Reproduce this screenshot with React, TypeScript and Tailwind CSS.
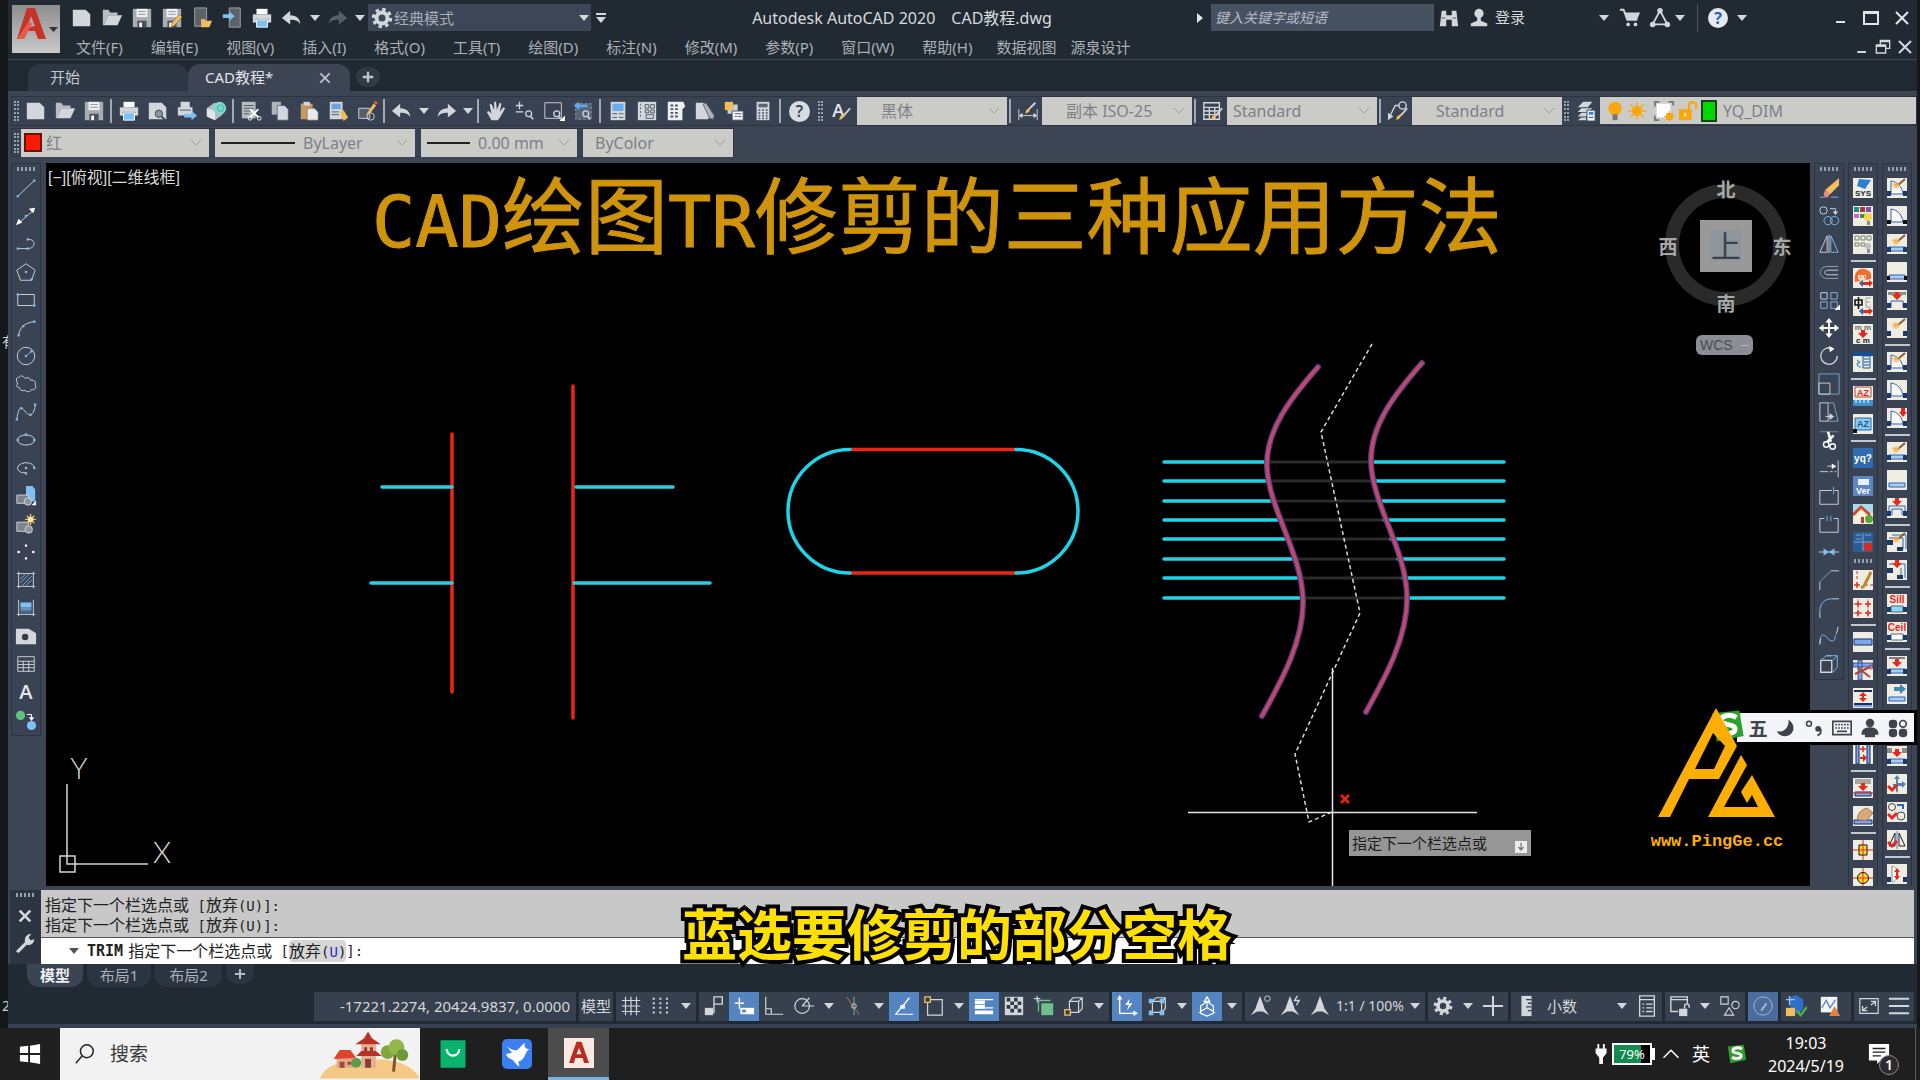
import type { ReactNode } from 'react'

const L = '#d3d7dc'
const B = '#7cc0f4'
const O = '#f2bd5c'

function Svg({ s = 24, box = 24, children }: { s?: number; box?: number; children: ReactNode }) {
  return (
    <svg width={s} height={s} viewBox={`0 0 ${box} ${box}`} fill="none" stroke="none" className="shrink-0">
      {children}
    </svg>
  )
}

function Dot({ x, y, c = B }: { x: number; y: number; c?: string }) {
  return <rect x={x - 1.2} y={y - 1.2} width="2.4" height="2.4" fill={c} />
}

const page = <path d="M2 3h14l5 5v13H2z" fill={L} />
const folder = (
  <>
    <path d="M2 20V3h6l2 3h8v3H8L3 20z" fill="#b9bec5" />
    <path d="M8 9h15l-5 11H3z" fill={L} />
  </>
)
const floppy = (
  <>
    <path d="M2 2h20v20H2z" fill="#a9adb2" />
    <path d="M6 2h12v9H6z" fill="#eef0f2" />
    <path d="M8 5h8M8 8h8" stroke="#8b9096" />
    <path d="M7 15h10v7H7z" fill="#4a525e" />
    <path d="M9 17h3v5H9z" fill="#fff" />
  </>
)
const printer = (
  <>
    <path d="M6 2h12v6H6z" fill="#fff" />
    <path d="M2 8h20v9H2z" fill={L} />
    <path d="M5 13h14v1H5z" fill="#4c5560" />
    <path d="M6 14h12v8H6z" fill={B} stroke="#fff" />
  </>
)
const pencil = <path d="M20 8l3 3-8 9-4 2 1-5z" fill={O} stroke="#7a5b33" strokeWidth=".6" />
const undo = <path d="M10 4v5c7 0 11 4 11 10-2-4-5-5-11-5v5l-9-7z" fill={L} />
const brush = (
  <>
    <path d="M22 9l-7 8" stroke={L} strokeWidth="2" />
    <path d="M17 14l-3 6-4 2 1-4z" fill={O} />
  </>
)
const gear = (
  <>
    <circle cx="12" cy="12" r="5.5" stroke={L} strokeWidth="4" />
    <circle cx="12" cy="12" r="8.5" stroke={L} strokeWidth="3.4" strokeDasharray="3.4 3.27" />
  </>
)
const lens = (x: number, y: number) => (
  <>
    <circle cx={x} cy={y} r="3.2" stroke={L} strokeWidth="1.4" />
    <path d={`M${x + 2} ${y + 3}l3 3`} stroke={L} strokeWidth="1.8" />
  </>
)
const person = (c: string) => (
  <>
    <circle cx="12" cy="7" r="5" fill={c} />
    <path d="M10 10h4v5l7 3v3H3v-3l7-3z" fill={c} />
  </>
)

const quickIcons: [string, ReactNode][] = [
  ['新建', page],
  ['打开', folder],
  ['保存', floppy],
  ['另存为', <>{floppy}{pencil}</>],
  ['从移动设备打开', <><path d="M4 1h13v20H4z" fill="#5d6268" stroke="#a1a7ad" /><path d="M11 22v-9h4l1 2h7l-3 7z" fill={O} /></>],
  ['保存到移动设备', <><path d="M9 1h12v21H9z" fill="#5d6268" stroke="#a1a7ad" /><path d="M2 8h7V5l6 5-6 5v-3H2z" fill={B} /></>],
  ['打印', printer],
]

type Tool = [string, ReactNode]

const fileTools: Tool[] = [['新建', page], ['打开', folder], ['保存', floppy]]
const plotTools: Tool[] = [
  ['打印', printer],
  ['打印预览', <>{page}<circle cx="13" cy="15" r="4" fill="#8f959d" stroke="#3c434e" /><path d="M16 18l4 4" stroke="#3c434e" strokeWidth="2" /></>],
  ['发布', <><path d="M5 2h10v6h3v9H2V8h3z" fill={L} /><path d="M4 11h12" stroke="#4c5560" /><path d="M9 15h8v-3l6 5-6 5v-3H9z" fill={B} /></>],
  ['3D 打印', <><path d="M2 9l8-6 9 3v10l-8 6-9-4z" fill="#b7bbc0" /><path d="M2 9l9 3v10l-9-4z" fill="#e3e5e7" /><circle cx="16" cy="9" r="7" fill="#7ed8cf" /><circle cx="17" cy="9" r="3.5" stroke="#48a89f" /></>],
]
const editTools: Tool[] = [
  ['剪切', <><path d="M2 2h15v18H2z" fill="#b9bdc2" /><path d="M4 6h11M4 9h11M4 12h8M4 15h6" stroke="#4c5560" /><path d="M11 10l9 9M20 10l-9 9" stroke="#fff" strokeWidth="2" /><circle cx="11" cy="20" r="2" stroke="#fff" /><circle cx="21" cy="20" r="2" stroke="#fff" /></>],
  ['复制', <><path d="M3 2h10v14H3z" fill="#aeb3b9" /><path d="M9 6h8l4 4v12H9z" fill={L} stroke="#495260" strokeWidth=".7" /></>],
  ['粘贴', <><path d="M3 4h13v17H3z" fill="#c59a5c" /><path d="M6 2h7v4H6z" fill={L} /><path d="M10 9h8l4 4v9H10z" fill="#e7e9eb" stroke="#555" strokeWidth=".6" /></>],
  ['特性匹配', <><path d="M3 2h14v19H3z" fill={L} /><path d="M5 4h10v6H5z" fill="#6ba4e0" /><path d="M5 13h8M5 16h8" stroke="#4c5560" /><path d="M14 13l4-2 5 8-5 4z" fill={O} /></>],
  ['块编辑器', <><path d="M3 9h12v11H3z" fill="#565e6b" stroke={L} /><circle cx="16" cy="18" r="4" stroke={L} /><path d="M19 4l3 2-7 9-4 1z" fill={O} /><path d="M20 2l3 2" stroke="#e2574a" strokeWidth="3" /></>],
]
const viewTools: Tool[] = [
  ['平移', <path d="M7 22l-5-9 2-1 3 3L5 5l2-1 3 7V2h2l1 9 3-8 2 1-2 9 4-5 2 1-5 9-3 4z" fill={L} />],
  ['实时缩放', <><path d="M2 6h8M6 2v8M2 13h8" stroke={L} strokeWidth="1.5" />{lens(16, 15)}</>],
  ['窗口缩放', <><path d="M2 3h18v17H2z" stroke={L} />{lens(15, 15)}<path d="M24 17v6h-6z" fill="#fff" /></>],
  ['缩放上一个', <><path d="M4 4h17v17H4z" fill="#566577" stroke="#8c97a6" strokeDasharray="3 2" /><path d="M2 6l6-4v3h9v3H8v3z" fill="#63a9e8" />{lens(15, 15)}</>],
]
const paletteTools: Tool[] = [
  ['特性', <><path d="M4 2h16v20H4z" fill={L} /><path d="M6 4h12v8H6z" fill="#69adf0" /><path d="M6 15h5M13 15h5M6 19h5M13 19h5" stroke="#4c5560" /></>],
  ['设计中心', <><path d="M2 2h20v20H2z" fill={L} /><path d="M5 4v16" stroke="#4c5560" strokeDasharray="2 2" /><path d="M10 5h4v4h-4zM16 5h4v4h-4zM10 11h4v3h-4zM16 11h4v3h-4zM11 16h8v4h-8z" stroke="#4c5560" /></>],
  ['工具选项板', <><path d="M3 2h17l2 5-3 3v12H3z" fill="#eef0f2" /><path d="M6 6h3M11 6h3M6 10h3M11 10h3M6 14h3M11 14h3M6 18h3M11 18h3" stroke="#4c5560" strokeWidth="2" /></>],
  ['图纸集', <><path d="M2 3h8l10 12-5 6H2z" fill={L} /><path d="M10 5l3-2 9 14-1 4-4-1z" fill="#aeb3b9" stroke="#5b6370" /></>],
  ['标记集', <><path d="M2 2h9v9H2z" fill={O} /><path d="M11 5h5v6h-5zM5 11h11v4H5z" fill="#c9cdd2" /><path d="M10 12h12v10H10z" fill="#f3f4f5" stroke="#4c5560" /><path d="M13 18h2M16 18h4M13 15h7" stroke="#4c5560" /></>],
  ['快速计算器', <><path d="M5 2h14v20H5z" fill={L} /><path d="M7 4h10v4H7z" fill="#5b6370" /><path d="M7 11h10M7 14h10M7 17h10M7 20h10" stroke="#5b6370" strokeWidth="2" strokeDasharray="2 2" /></>],
]

const drawTools: Tool[] = [
  ['直线', <><path d="M3 21L21 4" stroke={L} /><Dot x={3} y={21} /><Dot x={21} y={4} /></>],
  ['构造线', <><path d="M5 19L20 6" stroke={L} /><path d="M1 22l3-7 4 4zM22 3l-7 1 5 5z" fill="#fff" /><Dot x={12} y={12} /></>],
  ['多段线', <><path d="M3 17h11M14 7c9-1 9 10 0 10" stroke={L} /><Dot x={3} y={17} /><Dot x={14} y={17} /><Dot x={14} y={7} /></>],
  ['多边形', <><path d="M12 3l10 7-4 11H6L2 10z" stroke={L} /><Dot x={12} y={12} /><Dot x={18} y={20} /></>],
  ['矩形', <><path d="M3 6h18v12H3z" stroke={L} /><Dot x={3} y={6} /><Dot x={21} y={18} /></>],
  ['圆弧', <><path d="M4 20C5 12 10 6 22 5" stroke={L} /><Dot x={4} y={20} /><Dot x={9} y={10} /><Dot x={21} y={5} /></>],
  ['圆', <><circle cx="12" cy="12" r="9.5" stroke={L} /><path d="M12 12l7-6" stroke={B} /><Dot x={12} y={12} /><Dot x={18} y={7} /></>],
  ['修订云线', <path d="M3 12c-2-4-2-8 1-7 2-3 5-2 7 1 3-2 6 0 6 2 4-1 6 2 5 5 2 3-1 6-4 5-1 3-5 3-7 1-4 1-6-1-6-3-3 0-4-2-2-4z" stroke={L} />],
  ['样条曲线', <><path d="M2 21C3 9 6 6 8 8c4 4 6 8 9 7 3-1 5-6 5-12" stroke={L} /><Dot x={2} y={20} /><Dot x={7} y={8} /><Dot x={17} y={15} /><Dot x={22} y={4} /></>],
  ['椭圆', <><ellipse cx="12" cy="12" rx="9.5" ry="5.5" stroke={L} /><Dot x={3} y={12} /><Dot x={21} y={12} /><Dot x={12} y={6} /></>],
  ['椭圆弧', <><path d="M12 17C5 18 2 14 3 11c3-7 18-6 18 1" stroke={L} /><Dot x={12} y={12} /><Dot x={21} y={12} /><Dot x={12} y={18} /></>],
  ['插入块', <><path d="M12 1h7l3 4v13H12z" fill={B} /><path d="M2 11h13v9H2z" fill="#7d848e" stroke={L} /><circle cx="14" cy="18" r="4" fill="#8e949c" stroke={L} /><path d="M23 17v5h-5z" fill="#fff" /></>],
  ['创建块', <><path d="M2 10h13v10H2z" fill="#7d848e" stroke={L} /><circle cx="15" cy="18" r="4" fill="#8e949c" stroke={L} /><path d="M17 1v12M11 7h12M13 3l8 8M21 3l-8 8" stroke={O} strokeWidth="1.5" /><circle cx="17" cy="7" r="3" fill="#ffe9a8" /></>],
  ['点', <><Dot x={12} y={5} c="#fff" /><Dot x={4} y={12} c="#fff" /><Dot x={20} y={12} c="#fff" /><Dot x={12} y={19} c="#fff" /></>],
  ['图案填充', <><path d="M4 3v18M20 3v18M2 5h20M2 19h20" stroke={L} /><path d="M6 11l5-5M6 15l9-9M8 18l10-10M12 18l6-6" stroke={B} /></>],
  ['渐变色', <><path d="M4 3v18M20 3v18M2 19h20" stroke={L} /><path d="M6 6h12v5H6z" fill={B} /><path d="M6 11h12v4H6z" fill="#6792bd" /><path d="M6 15h12v3H6z" fill="#4d6785" /></>],
  ['面域', <><path d="M1 4h14l8 5v12H1z" fill={L} /><circle cx="11" cy="13" r="3.5" fill="#323b48" /></>],
  ['表格', <path d="M3 4h18v16H3zM3 9h18M3 12.500h18M3 16h18M9 9v11M15 9v11" stroke={L} />],
  ['多行文字', <text x="12" y="20" fill="#e4e7ea" fontSize="22" fontWeight="600" textAnchor="middle" fontFamily="Open Sans, sans-serif">A</text>],
  ['添加选定对象', <><circle cx="6" cy="7" r="5" fill="#5ec47f" /><circle cx="18" cy="18" r="5" fill={B} /><path d="M13 6h5v4" stroke="#fff" /><path d="M15 9h6l-3 4z" fill="#fff" /></>],
]

const modifyTools: Tool[] = [
  ['删除', <><path d="M2 22h6M14 22h8" stroke={B} /><path d="M23 1v8L13 19l-5-5z" fill={O} /><path d="M8 14l5 4-2 4H8l-2-3z" fill="#e58a86" /></>],
  ['复制', <><circle cx="6" cy="6" r="4" stroke={L} /><circle cx="11" cy="17" r="4.500" stroke={B} /><circle cx="18" cy="17" r="4.500" stroke={B} /><path d="M13 4h6v4" stroke={L} /><path d="M16 7h6l-3 4z" fill={L} /></>],
  ['镜像', <><path d="M10 3v18H2zM12 2v20" stroke={L} /><path d="M14 3v18h8z" stroke={B} /></>],
  ['偏移', <><path d="M22 6H10C0 6 0 19 10 19h12" stroke="#9aa6b5" /><path d="M22 10H11c-5 0-5 5 0 5h11" stroke={L} /></>],
  ['阵列', <><path d="M3 4h7v7H3z" stroke={L} /><path d="M14 4h7v7h-7zM3 14h7v7H3zM14 14h7v7h-7z" stroke="#8bb9dd" /><path d="M24 17v6h-6z" fill="#fff" /></>],
  ['移动', <><path d="M12 4v16M4 12h16" stroke="#fff" strokeWidth="2" /><path d="M12 1l4 5H8zM12 23l4-5H8zM1 12l5-4v8zM23 12l-5-4v8z" fill="#fff" /></>],
  ['旋转', <><path d="M16 4a9 9 0 1 0 5 8" stroke={L} strokeWidth="1.400" /><path d="M12 1l6 3-5 4z" fill="#fff" /></>],
  ['缩放', <><path d="M1 1h22v22H1z" stroke="#7ca7cc" /><path d="M1 11h12v12H1z" stroke={L} /></>],
  ['拉伸', <><path d="M2 2h9v20H2z" stroke={L} /><path d="M11 2h6l5 20H11" stroke="#7ca7cc" /><path d="M8 17h7M13 14l4 3-4 3z" stroke={L} fill={L} /></>],
  ['修剪', <><path d="M2 3h20" stroke="#7c8899" /><path d="M11 3l3 11M17 7l-7 7" stroke="#fff" strokeWidth="2.800" /><circle cx="9" cy="17" r="3" stroke="#fff" strokeWidth="1.600" /><circle cx="16" cy="19" r="3" stroke="#fff" strokeWidth="1.600" /></>],
  ['延伸', <><path d="M2 16h18" stroke={L} strokeDasharray="9 2 3 2" /><path d="M22 4v18M10 10h6" stroke={L} /><path d="M15 7l5 3-5 3z" fill="#fff" /></>],
  ['打断于点', <><path d="M15 6H2v15h20V6h-4" stroke={L} /><path d="M17 2v8" stroke={B} /></>],
  ['打断', <><path d="M7 6H2v15h20V6h-5" stroke={L} /><path d="M10 3v6M14 3v6" stroke={B} /></>],
  ['合并', <><path d="M1 12h22" stroke={L} /><path d="M6 8l6 4-6 4zM18 8l-6 4 6 4z" fill={B} /></>],
  ['倒角', <><path d="M2 23v-9M14 2h9" stroke={L} /><path d="M2 14L14 2" stroke="#8fa0b3" /></>],
  ['圆角', <><path d="M2 23v-7M15 2h8" stroke={L} /><path d="M2 16C2 7 7 2 15 2" stroke={B} /></>],
  ['光顺曲线', <><path d="M2 21c0-12 4-12 8-7s9 5 9-3" stroke={B} /><path d="M2 21l1-6M20 10l2-8" stroke={L} /></>],
  ['分解', <><path d="M3 8h12v13H3z" stroke={L} strokeWidth="1.500" /><path d="M3 8l6-5h12l-5 5M21 3v13l-5 5M9 3h6" stroke={B} /></>],
]

// plug-in tiles, drawn on a 20px grid
const beam = <path d="M2 13h16v4H2z" fill="#a9cdf0" stroke="#2c62b8" />
const jambs = <path d="M0 13h4v5H0zM16 13h4v5h-4z" fill="#1d3a66" />
const doorArc = <path d="M4 16V3c7 1 11 6 12 13z" fill="#fbfaf5" stroke="#2c62b8" />
const wand = (
  <>
    <path d="M18 1l-7 6" stroke="#8a5a35" strokeWidth="2" />
    <path d="M9 4v7M5 7h8M6 5l6 5M12 5l-6 5" stroke="#f0a838" />
  </>
)
const down = (y = 0) => <path d={`M8 ${y}h4v3h3l-5 5-5-5h3z`} fill="#e8261c" />
const tick = <path d="M1 12l4 4 5-5" stroke="#e8261c" strokeWidth="3" />
const crosses = (pts: [number, number][]) =>
  pts.map(([x, y]) => <path key={`${x}-${y}`} d={`M${x - 3} ${y}h6M${x} ${y - 3}v6`} stroke="#d93025" strokeWidth="1.500" />)
const tileText = (t: string, y: number, c: string, size = 9) => (
  <text x="10" y={y} fill={c} fontSize={size} fontWeight="700" textAnchor="middle" fontFamily="Liberation Sans, sans-serif">
    {t}
  </text>
)

const SEP: Tool = ['', null]
const GRIP: Tool = ['grip', null]

const pluginTools: Tool[] = [
  ['系统', <><path d="M6 1l12 1-6 9-8-3z" fill="#2f7fd0" />{tileText('SYS', 18, '#1c2a33', 8)}</>],
  ['图层颜色', <><path d="M1 1h5v5H1z" fill="#1c8f84" /><path d="M7 1h5v5H7z" fill="#a03a3a" /><path d="M13 1h5v5h-5z" fill="#7c4fa8" /><path d="M1 8h5v4H1z" fill="#e05bd2" /><path d="M7 8h5v4H7z" fill="#3c8f4c" /><circle cx="15" cy="11" r="4" fill="#f9d54a" /><path d="M14 15h3v4h-3z" fill="#8f8f8f" /></>],
  ['图层', <><path d="M2 2h4v4H2zM8 2h4v4H8zM14 2h4v4h-4zM2 9h4v3H2zM8 9h4v3H8z" stroke="#74806e" /><circle cx="15" cy="12" r="3" fill="#b8bec4" /><path d="M14 15h3v4h-3z" fill="#8f8f8f" /></>],
  SEP,
  ['用户', <><path d="M2 14C0 2 8 0 11 1c7 1 8 6 7 10z" fill="#f07030" /><circle cx="9" cy="9" r="4" fill="#ffd9b8" /><path d="M5 6h8" stroke="#f07030" strokeWidth="2" /><path d="M7 9h1M11 9h1" stroke="#333" /><path d="M6 15l4-3v2h6v-2l4 3-4 4v-2h-6v2z" fill="#e8261c" /><path d="M6 15l4-3v7z" fill="#1f6fd0" /></>],
  ['中英', <><path d="M2 4h7v5H2zM5.500 1v12" stroke="#111" strokeWidth="1.600" /><path d="M18 2h-5v9h5M13 6h4" stroke="#9ba39a" /><path d="M6 15l4-3v2h6v-2l4 3-4 4v-2h-6v2z" fill="#e8261c" /><path d="M6 15l4-3v7z" fill="#1f6fd0" /></>],
  ['单位换算', <>{tileText('m m', 6, '#6f6a60', 8)}{tileText('c m', 19, '#222', 8)}{down(6)}</>],
  ['窗口', <><path d="M0 0h20v4H0z" fill="#18508f" /><path d="M10 4h7v12h-7z" fill="#dff0fb" stroke="#18508f" /><path d="M11 7h5M11 10h5M11 13h5" stroke="#18508f" /><path d="M8 15c-5 0-5-5-1-5M4 8l3 2-3 3" stroke="#2c7fd6" /></>],
  SEP,
  ['文字标尺', <><path d="M2 1h16v10H2z" stroke="#b84b40" />{tileText('AZ', 10, '#e8261c')}<path d="M0 14h20v6H0z" fill="#3d93d0" /><path d="M3 14v3M7 14v3M11 14v3M15 14v3" stroke="#fff" /></>],
  ['文字框', <><path d="M2 4h16v12H2z" fill="#8ccbf0" stroke="#27689f" />{tileText('AZ', 13, '#175a96')}<path d="M0 15h4v4H0z" fill="#111" /></>],
  SEP,
  ['帮助', <><path d="M0 0h20v20H0z" fill="#2f6db0" />{tileText('yq?', 14, '#fff', 10)}</>],
  ['版本', <><path d="M0 0h20v20H0z" fill="#5d84c4" /><path d="M5 3h11v6H5z" fill="#e9f2fb" />{tileText('Ver', 18, '#fff', 9)}</>],
  ['主页', <><path d="M0 0h20v9H0z" fill="#a8d8ee" /><path d="M2 11l7-8 8 8v7H4v-7z" fill="#fff1dc" /><path d="M0 11L8 3l9 8" stroke="#cf4a2a" strokeWidth="3" /><path d="M8 13h3v6H8z" fill="#b0452c" /><circle cx="16" cy="15" r="4" fill="#57a639" /></>],
  ['图框', <><path d="M0 0h20v20H0z" fill="#2b5c97" /><path d="M1 10h18M10 1v18M3 3h5M12 3h6M3 7h5" stroke="#7fa8cc" /><path d="M11 11h8v8h-8z" fill="#d82b22" /></>],
  GRIP,
  ['轴线绘制', <><path d="M4 1v9M12 15h8" stroke="#d93025" strokeDasharray="3 2" />{crosses([[4, 15]])}<path d="M18 2l-7 14-3 2" stroke="#b98a2e" strokeWidth="3" /></>],
  ['轴网', <>{crosses([[5, 6], [15, 6], [5, 15], [15, 15]])}<path d="M5 1v19M15 1v19M0 6h20M0 15h20" stroke="#d93025" strokeWidth=".6" strokeDasharray="2 2" /></>],
  SEP,
  ['墙体', <path d="M1 7h18v6H1z" fill="#7fa5ee" stroke="#15305c" />],
  ['墙体修剪', <><path d="M0 3h20v4H0zM5 0h4v20H5z" fill="#7fa5ee" stroke="#15305c" strokeWidth=".7" /><path d="M2 14l15-7M5 8l12 9" stroke="#b0452c" strokeWidth="2" /><circle cx="18" cy="7" r="2" stroke="#b0452c" /></>],
  ['墙厚', <><path d="M1 3h18M1 16h18" stroke="#15305c" strokeWidth="2" /><path d="M1 18h18" stroke="#7fa5ee" strokeWidth="2" /><path d="M10 4l4 4h-3v2h3l-4 4-4-4h3V8H6z" fill="#e8261c" /></>],
  ['墙体标高', <><path d="M1 3h18v4H1z" fill="#7fa5ee" stroke="#15305c" />{down(9)}</>],
  ['双墙', <><path d="M3 0h3v20H3zM14 0h3v20h-3z" fill="#7fa5ee" stroke="#15305c" />{crosses([[10, 5]])}<path d="M7 13h3v-3l4 4-4 4v-3H7z" fill="#e8261c" /></>],
  SEP,
  ['楼板', <><path d="M2 1h16v5H2z" fill="#a8a8a0" /><path d="M2 14h16v4H2z" fill="#7fa5ee" stroke="#15305c" /><path d="M0 15h20" stroke="#e8261c" />{down(5)}</>],
  ['手动', <><path d="M1 14h18v4H1z" fill="#7fa5ee" stroke="#15305c" /><path d="M5 14c-2-6 4-11 9-12l6 5-7 8z" fill="#d9a77c" stroke="#85583a" strokeWidth=".7" /></>],
  SEP,
  ['柱子', <><path d="M10 0v20M0 10h20" stroke="#e8261c" /><path d="M6 5h8v10H6z" fill="#ffd92e" stroke="#111" /><path d="M10 6v8M7 10h6" stroke="#e8261c" /></>],
  ['圆柱', <><path d="M10 0v20M0 10h20" stroke="#e8261c" /><circle cx="10" cy="10" r="5.500" fill="#ffd92e" stroke="#111" /><path d="M10 5v10M5 10h10" stroke="#e8261c" /></>],
]

const doorTools: Tool[] = [
  ['智能门', <>{doorArc}{wand}{jambs}</>],
  ['平开门', <>{doorArc}<path d="M0 14h4v4H0zM16 14h4v4h-4z" fill="#111" /></>],
  ['智能窗', <>{wand}{beam}{jambs}</>],
  ['窗', <>{beam}<path d="M0 14h3v4H0zM17 14h3v4h-3z" fill="#111" /></>],
  ['窗偏移', <><path d="M1 2h18v3H1z" fill="#8c8c86" /><path d="M4 17v-6h12v6" stroke="#2c62b8" />{jambs}{down(2)}</>],
  ['门窗清理', <>{wand}{jambs}</>],
  SEP,
  ['智能弧门', <>{doorArc}{wand}{jambs}</>],
  ['弧门', <>{doorArc}{jambs}</>],
  ['门移动', <>{doorArc}{jambs}<path d="M14 0h4v4h2l-4 5-4-5h2z" fill="#e8261c" /></>],
  SEP,
  ['智能飘窗', <>{wand}{beam}{jambs}</>],
  ['飘窗', beam],
  ['门洞', <><path d="M2 17V8h16v9M5 17v-6h10v6" stroke="#2c62b8" />{jambs}{down(0)}</>],
  SEP,
  ['智能转角窗', <><path d="M2 6h14v11M5 3h14v14" stroke="#2c62b8" />{wand}<path d="M0 8h6v5H0zM10 15h6v4h-6z" fill="#1d3a66" /></>],
  ['转角窗', <><path d="M2 4h16v14M14 8v10" stroke="#2c62b8" /><path d="M0 8h6v5H0zM10 15h6v4h-6z" fill="#1d3a66" />{down(0)}</>],
  SEP,
  ['窗台线', <>{tileText('Sill', 9, '#e8261c', 10)}<path d="M4 12h12v6H4z" fill="#8fd3f5" stroke="#4d6a80" />{jambs}</>],
  ['过梁线', <>{tileText('Ceil', 9, '#e8261c', 10)}<path d="M4 12h12v6H4z" fill="#fff" stroke="#4d6a80" />{jambs}</>],
  SEP,
  ['窗对齐', <><path d="M2 2h16" stroke="#111" />{beam}{jambs}{down(3)}</>],
  ['窗平移', <><path d="M7 3h6V0l6 5-6 5V7H7z" fill="#3f87bb" />{beam}</>],
  SEP,
  ['窗合并', <>{beam}{jambs}</>],
  ['窗替换', <><path d="M0 2h5v5H0zM15 2h5v5h-5z" fill="#8c8c86" />{beam}{jambs}{down(3)}</>],
  ['门窗移动', <><path d="M10 1l3 4h-2v4h4V7l4 3-4 4v-2h-4v5l-1 2-1-2v-5H6v-2h3V5H7z" fill="#4f83b6" />{tick}</>],
  ['门窗复制', <><circle cx="5" cy="5" r="3.500" stroke="#445" /><circle cx="14" cy="14" r="4" stroke="#445" /><path d="M10 3h6v4" stroke="#2c62b8" strokeWidth="2" />{tick}</>],
  ['门窗镜像', <><path d="M8 3v13H2zM12 3v13h6z" stroke="#223" /><path d="M10 1v18" stroke="#2c86c8" />{tick}</>],
  SEP,
  ['门扇翻转', <><path d="M5 18V2c8 2 8 14 0 16z" fill="#fff" stroke="#6b9a9a" />{jambs}<path d="M10 4l3 4h-2v4h2l-3 4-3-4h2V8H7z" fill="#e8261c" /></>],
]

function Caret({ c = L }: { c?: string }) {
  return (
    <svg width="10" height="6" viewBox="0 0 10 6" className="shrink-0">
      <path d="M0 0h10L5 6z" fill={c} />
    </svg>
  )
}

function ToolButton({ tool, className = 'w-[29px]' }: { tool: Tool; className?: string }) {
  return (
    <button type="button" aria-label={tool[0]} className={`flex h-7 shrink-0 items-center justify-center ${className}`}>
      <Svg s={22}>{tool[1]}</Svg>
    </button>
  )
}

function DropButton({ label, className = 'w-[15px]' }: { label: string; className?: string }) {
  return (
    <button type="button" aria-label={label} className={`flex h-7 shrink-0 items-center justify-center ${className}`}>
      <Caret />
    </button>
  )
}

function Rule() {
  return <span className="mx-[2px] h-6 w-[2px] shrink-0 bg-[#a3a9b2]" />
}

function Grip() {
  return <span className="mx-[2px] h-5 w-[5px] shrink-0 border-x-2 border-dotted border-[#98a0ab]" />
}

function Combo({ label, value, before, className, pad = 'pl-2' }: { label: string; value: string; before?: ReactNode; className: string; pad?: string }) {
  return (
    <div className={`flex h-7 items-center bg-[#cbcbc8] pr-2 ${className}`}>
      {before}
      <select aria-label={label} className={`min-w-0 flex-1 appearance-none bg-transparent text-base leading-6 text-[#808084] ${pad}`}>
        <option>{value}</option>
      </select>
      <svg width="10" height="6" viewBox="0 0 10 6" fill="none" stroke="#9d9d9b" className="shrink-0">
        <path d="M0 0l5 5 5-5" />
      </svg>
    </div>
  )
}

const menus = ['文件(F)', '编辑(E)', '视图(V)', '插入(I)', '格式(O)', '工具(T)', '绘图(D)', '标注(N)', '修改(M)', '参数(P)', '窗口(W)', '帮助(H)']

function WinButton({ label, d }: { label: string; d: string }) {
  return (
    <button type="button" aria-label={label} className="flex h-6 w-[31px] items-center justify-center">
      <svg width="16" height="16" viewBox="0 0 16 16" fill="none" stroke="#e3e6e9" strokeWidth="2">
        <path d={d} />
      </svg>
    </button>
  )
}

function Header() {
  return (
    <header className="flex h-[59px] shrink-0 bg-[#212a32] pl-1 text-[#d6dade]">
      <button type="button" aria-label="应用程序菜单" className="mt-[5px] flex h-12 w-12 items-center bg-linear-to-b from-[#8e8e8e] to-[#c9c9c9]">
        <svg width="48" height="48" viewBox="0 0 48 48">
          <path d="M5 34L15 3h8l11 31h-8l-3-8H14l-2 8z" fill="#c93327" />
          <path d="M19 11l4 10-8 2z" fill="#a8a8a8" />
          <path d="M5 34l12-18 3 3-8 15z" fill="#ea5a48" />
          <path d="M37 22h9l-4.500 5z" fill="#333" />
        </svg>
      </button>
      <div className="flex min-w-0 flex-1 flex-col pl-[7px]">
        <div className="flex h-9 items-center">
          {quickIcons.map((t) => (
            <ToolButton key={t[0]} tool={t} className="w-[30px]" />
          ))}
          <ToolButton tool={['放弃', undo]} className="w-[30px]" />
          <DropButton label="放弃列表" />
          <button type="button" aria-label="重做" className="flex w-[30px] -scale-x-100 justify-center opacity-30">
            <Svg s={22}>{undo}</Svg>
          </button>
          <DropButton label="重做列表" />
          <div className="ml-px flex h-[27px] w-[223px] items-center bg-[#3d4657] px-[2px]">
            <Svg>{gear}</Svg>
            <select aria-label="工作空间" className="flex-1 appearance-none bg-transparent text-[15px] leading-6 text-[#a7afba]">
              <option>经典模式</option>
            </select>
            <Caret />
          </div>
          <button type="button" aria-label="自定义快速访问工具栏" className="flex w-5 flex-col items-center gap-[2px]">
            <span className="h-[2px] w-[10px] bg-[#d3d7dc]" />
            <Caret />
          </button>
          <span className="ml-auto pl-1 text-base whitespace-nowrap">Autodesk AutoCAD 2020</span>
          <span className="mr-auto ml-4 text-base">CAD教程.dwg</span>
          <span className="flex w-[22px] justify-center">
            <svg width="6" height="10" viewBox="0 0 6 10"><path d="M0 0v10l6-5z" fill="#e3e6e9" /></svg>
          </span>
          <input aria-label="搜索" placeholder="键入关键字或短语" className="h-[27px] w-[223px] bg-[#465162] px-1 text-sm italic placeholder:text-[#b4bac3]" />
          <ToolButton tool={['搜索', <><path d="M4 4h5v5h6V4h5l2 17h-7v-7H9v7H2z" fill={L} /><path d="M4 12h4M16 12h4" stroke="#444" /></>]} className="w-[30px]" />
          <ToolButton tool={['登录', person(L)]} className="w-[30px]" />
          <button type="button" className="w-8 text-[15px] whitespace-nowrap">登录</button>
          <DropButton label="登录列表" className="ml-[70px] w-4" />
          <ToolButton tool={['购物车', <><path d="M1 3h4l4 11h11" stroke={L} strokeWidth="2" /><path d="M6 6h17l-3 7H9z" fill={L} /><circle cx="10" cy="19" r="2" fill={L} /><circle cx="18" cy="19" r="2" fill={L} /></>]} className="w-9" />
          <ToolButton tool={['Autodesk App', <><path d="M12 4l8 15H4z" stroke={L} strokeWidth="2" /><circle cx="12" cy="4" r="3" fill={L} /><circle cx="4" cy="19" r="3" fill={L} /><circle cx="20" cy="19" r="3" fill={L} /></>]} className="w-6" />
          <DropButton label="应用列表" />
          <span className="mx-[10px] h-7 w-px bg-[#4b545e]" />
          <button type="button" className="flex h-5 w-5 items-center justify-center rounded-full bg-[#e6eaf0] text-base font-bold text-[#2c5baf]">?</button>
          <DropButton label="帮助列表" className="ml-1 w-5" />
          <span className="w-[72px]" />
          <WinButton label="最小化" d="M4 12h9" />
          <WinButton label="最大化" d="M1 2h14v12H1zM1 3h14" />
          <WinButton label="关闭" d="M2 2l12 12M14 2L2 14" />
        </div>
        <nav className="flex items-center text-[15px] leading-6 text-[#aab0b8]">
          <div className="flex gap-7 pl-[9px]">
            {menus.map((m) => (
              <button key={m} type="button" className="whitespace-nowrap">{m}</button>
            ))}
          </div>
          <button type="button" className="ml-6">数据视图</button>
          <button type="button" className="mr-auto ml-[14px]">源泉设计</button>
          <div className="flex items-center pr-px">
            <button type="button" aria-label="最小化文档" className="flex w-5 justify-center"><Svg s={16}><path d="M5 18h13v3H5z" fill={L} /></Svg></button>
            <button type="button" aria-label="还原文档" className="flex w-[22px] justify-center"><Svg s={16}><path d="M8 8V2h14v12h-5M2 9h14v12H2zM2 11h14M8 4h14" stroke={L} strokeWidth="2" /></Svg></button>
            <button type="button" aria-label="关闭文档" className="flex w-[22px] justify-center"><Svg s={16}><path d="M3 3l18 18M21 3L3 21" stroke={L} strokeWidth="3" /></Svg></button>
          </div>
        </nav>
      </div>
    </header>
  )
}

function FileTabs() {
  return (
    <div className="flex h-8 shrink-0 items-end border-t border-[#3e4852] bg-[#202931] pl-5 text-[15px]">
      <button type="button" className="h-[27px] w-[160px] rounded-t-xl bg-[#2d3743] pl-[22px] text-left text-[#c3c8ce]">开始</button>
      <div className="flex h-[27px] w-[162px] items-center rounded-t-xl bg-[#3d4454] pl-[17px] text-[#e1e4e8]">
        <button type="button" className="flex-1 text-left">CAD教程*</button>
        <button type="button" aria-label="关闭选项卡" className="mr-[18px]"><Svg s={14}><path d="M4 4l16 16M20 4L4 20" stroke="#bfc4cb" strokeWidth="3" /></Svg></button>
      </div>
      <button type="button" aria-label="新选项卡" className="mb-1 ml-[6px] flex h-5 w-6 items-center justify-center rounded-full bg-[#303a45]">
        <Svg s={14}><path d="M12 3v18M3 12h18" stroke="#bfc4cb" strokeWidth="4" /></Svg>
      </button>
    </div>
  )
}

function Toolbars() {
  return (
    <div className="shrink-0 bg-[#3d4454] pt-[5px] pl-[3px]">
      <div className="flex h-[30px] items-center border border-[#2c3442] bg-[#384252]">
        <Grip />
        {fileTools.map((t) => <ToolButton key={t[0]} tool={t} />)}
        <Rule />
        {plotTools.map((t) => <ToolButton key={t[0]} tool={t} />)}
        <Rule />
        {editTools.map((t) => <ToolButton key={t[0]} tool={t} />)}
        <Rule />
        <ToolButton tool={['放弃', undo]} />
        <DropButton label="放弃列表" />
        <ToolButton tool={['重做', <g transform="translate(24 0) scale(-1 1)">{undo}</g>]} />
        <DropButton label="重做列表" />
        <Rule />
        {viewTools.map((t) => <ToolButton key={t[0]} tool={t} />)}
        <Rule />
        {paletteTools.map((t) => <ToolButton key={t[0]} tool={t} />)}
        <Rule />
        <button type="button" className="mx-[6px] flex h-[21px] w-[21px] shrink-0 items-center justify-center rounded-full bg-[#d9dcdf] text-base font-semibold text-[#3d4454]">?</button>
        <Grip />
        <ToolButton
          className="w-8"
          tool={['文字样式', <><text x="9" y="18" fill="#e4e7ea" fontSize="20" textAnchor="middle" fontWeight="600" fontFamily="Open Sans, sans-serif">A</text>{brush}</>]}
        />
        <Combo label="文字样式" value="黑体" className="w-[150px]" pad="pl-6" />
        <Rule />
        <ToolButton tool={['标注样式', <><path d="M2 10v12M22 10v12M3 17h18" stroke={L} /><path d="M2 17l4-3v6zM22 17l-4-3v6z" fill={L} /><path d="M20 3l-7 7" stroke={L} strokeWidth="2" /><path d="M15 8l-2 5-4 2 1-4z" fill={O} /></>]} />
        <Combo label="标注样式" value="副本 ISO-25" className="w-[150px]" pad="pl-6" />
        <Rule />
        <ToolButton tool={['表格样式', <><path d="M2 3h17v18H2zM2 8h17M2 12h17M2 16h17M8 8v13M14 8v13" stroke={L} strokeWidth="1.500" />{brush}</>]} />
        <Combo label="表格样式" value="Standard" className="w-[150px]" pad="pl-[6px]" />
        <Rule />
        <ToolButton tool={['多重引线样式', <><circle cx="17" cy="6" r="4" stroke={L} strokeWidth="1.500" /><path d="M13 6H9L3 18" stroke={L} strokeWidth="1.500" /><path d="M1 22v-8l6 4z" fill={L} />{brush}</>]} />
        <Combo label="多重引线样式" value="Standard" className="w-[150px]" pad="pl-6" />
        <Grip />
        <ToolButton tool={['图层特性', <><path d="M3 8l6-6h10l-5 6zM3 13l4-4h12l-5 4zM3 18l4-4h9l-4 4zM3 22l4-3h5v3z" fill={L} /><path d="M13 11h9v12h-9z" fill="#eef0f2" stroke="#345" /><path d="M15 13h5v3h-5z" fill="#3c7fd0" /><path d="M15 19h5" stroke="#345" /></>]} />
        <div className="flex h-[27px] min-w-0 flex-1 items-center gap-[2px] self-start bg-[#cbcbc8] pl-[5px]">
          <Svg s={20}><circle cx="12" cy="9" r="8" fill="#f9a70c" /><path d="M9 16h6v7H9z" fill="#767676" /></Svg>
          <Svg s={20}><circle cx="12" cy="12" r="6" fill="#f9a70c" /><path d="M12 1v22M1 12h22M4 4l16 16M20 4L4 20" stroke="#f9a70c" strokeWidth="1.500" /></Svg>
          <span className="ml-1 flex"><Svg s={22}><path d="M4 4h15v15H4z" fill="#fff" /><path d="M2 7V2h5M17 2h5v4M2 17v5h5" stroke="#777" strokeWidth="2" /><circle cx="18" cy="18" r="4" fill="#f9a70c" /><path d="M18 12v12M12 18h12M14 14l8 8M22 14l-8 8" stroke="#f9a70c" /></Svg></span>
          <Svg s={22}><path d="M2 10h14v12H2z" fill="#f9a70c" /><path d="M13 10V6c0-5 8-5 8 0v4" stroke="#f9a70c" strokeWidth="2.500" /><path d="M9 14v4" stroke="#fff4d0" strokeWidth="2" /></Svg>
          <span className="h-[22px] w-4 shrink-0 border-2 border-[#173f17] bg-[#00d900]" />
          <select aria-label="图层" className="ml-1 min-w-0 flex-1 appearance-none bg-transparent text-base leading-6 text-[#808084]">
            <option>YQ_DIM</option>
          </select>
        </div>
      </div>
      <div className="mt-[2px] mb-[6px] flex h-[29px] w-fit items-center gap-[6px] border border-[#2c3442] bg-[#384252]">
        <div className="flex items-center">
          <Grip />
          <Combo label="颜色" value="红" before={<span className="ml-[3px] h-[19px] w-[18px] border-2 border-[#6b1008] bg-[#fb1a00]" />} className="w-[188px]" pad="pl-1" />
        </div>
        <Combo label="线型" value="ByLayer" before={<span className="ml-[6px] h-[2px] w-[74px] bg-[#222]" />} className="w-[200px]" />
        <Combo label="线宽" value="0.00 mm" before={<span className="ml-[6px] h-[2px] w-[43px] bg-[#222]" />} className="w-[156px]" />
        <Combo label="打印样式" value="ByColor" className="w-[150px]" pad="pl-3" />
      </div>
    </div>
  )
}

function DotRow() {
  return <span className="my-[3px] h-1 w-[18px] shrink-0 border-y-2 border-dotted border-[#98a0ab]" />
}

function Column({ tools, tile = false }: { tools: Tool[]; tile?: boolean }) {
  return (
    <div className="flex w-[30px] shrink-0 flex-col items-center border border-[#2c3442] bg-[#3a4353] pb-px">
      <DotRow />
      {tools.map(([label, art], i) => {
        if (label === 'grip') return <DotRow key={i} />
        if (!art) return <span key={i} className="my-[2px] h-[2px] w-[25px] shrink-0 bg-[#c3c8cf]" />
        return (
          <button key={i} type="button" aria-label={label} className="flex h-7 w-7 shrink-0 items-center justify-center">
            {tile ? (
              <span className="bg-[#efece1]"><Svg s={20} box={20}>{art}</Svg></span>
            ) : (
              <Svg s={22}>{art}</Svg>
            )}
          </button>
        )
      })}
    </div>
  )
}

// [y, left boundary x, right boundary x] of each fence line
const fences = [
  [462, 1267, 1371],
  [481, 1269, 1373],
  [501, 1274, 1378],
  [520, 1280, 1384],
  [539, 1287, 1391],
  [559, 1294, 1398],
  [578, 1299, 1403],
  [598, 1303, 1407],
]
const wave = 'M1318 367C1290 399 1266 430 1267 466C1268 508 1302 553 1303 600C1304 640 1282 680 1262 716'

function Drawing() {
  return (
    <svg viewBox="46 163 1764 723" className="absolute inset-0 h-full w-full" fill="none" strokeWidth="3.500">
      <g stroke="#ee2512" strokeLinecap="round">
        <path d="M452 434v258M573 386v332" />
        <path d="M850 449.500h166M850 573h166" />
      </g>
      <g stroke="#1fd3e8" strokeLinecap="round">
        <path d="M382 487h70M371 583h81M576 487h97M574 583h136" />
        <path d="M850 449.500a62 61.750 0 0 0 0 123.500M1016 449.500a62 61.750 0 0 1 0 123.500" />
      </g>
      {fences.map(([y, a, b]) => (
        <g key={y}>
          <path d={`M${a} ${y}H${b}`} stroke="#2b2b2b" strokeWidth="3" />
          <path d={`M1164 ${y}H${a}M${b} ${y}H1504`} stroke="#1fd3e8" strokeLinecap="round" />
        </g>
      ))}
      {['', 'translate(104 -4)'].map((t) => (
        <g key={t} transform={t || undefined} strokeLinecap="round">
          <path d={wave} stroke="#4a3c86" strokeWidth="6" />
          <path d={wave} stroke="#c24868" />
        </g>
      ))}
      <path d="M1372 344L1321 432L1360 613L1295 754L1309 822L1332 812" stroke="#d8d8d8" strokeWidth="1.500" strokeDasharray="4 3" />
      <path d="M1332.500 668v218M1188 812.500h289" stroke="#e6e6e6" strokeWidth="1.500" />
      <path d="M1341 795l8 8M1349 795l-8 8" stroke="#f0200f" strokeWidth="2.500" />
      <g stroke="#d5d5d5" strokeWidth="1.500">
        <path d="M67 784v80h81M60 856h15v16H60z" />
      </g>
      <g fill="#d5d5d5" fontSize="29" fontWeight="300" fontFamily="Lato, sans-serif" textAnchor="middle">
        <text x="79" y="779">Y</text>
        <text x="162" y="863">X</text>
      </g>
      <circle cx="1726" cy="245" r="54" stroke="#2a2a2a" strokeWidth="14" />
      <path d="M1700 220h52v52h-52z" fill="#999" />
      <path d="M1710 230h31v31h-31z" fill="#8d959d" />
      <g fill="#a8a8a8" fontSize="19" fontWeight="600" fontFamily="Noto Sans CJK SC, sans-serif" textAnchor="middle">
        <text x="1726" y="197">北</text>
        <text x="1668" y="254">西</text>
        <text x="1782" y="254">东</text>
        <text x="1726" y="311">南</text>
        <text x="1726" y="257" fill="#3c4148" fontSize="30" fontWeight="400">上</text>
      </g>
    </svg>
  )
}

function Logo() {
  return (
    <div className="absolute right-[28px] bottom-[32px] flex w-[130px] flex-col items-center">
      <svg width="118" height="110" viewBox="0 0 118 110" fill="#fdae05" fillRule="evenodd">
        <path d="M0 109L58 0l21 38-18 33H31L12 109zM55 25l12 13-11 23H37z" />
        <path d="M50 109l33-62 6 10-23 42h34l-6-12-5 8-6-11 11-17 23 42z" />
      </svg>
      <span className="mt-3 font-['Liberation_Mono',monospace] text-[17px] leading-6 font-bold text-[#fdae05]">www.PingGe.cc</span>
    </div>
  )
}

const ime: Tool[] = [
  ['五笔', <text x="12" y="21" fill="#3f434c" fontSize="23" fontWeight="600" textAnchor="middle" fontFamily="Noto Sans CJK SC, sans-serif">五</text>],
  ['半角', <path d="M15 2c8 5 8 15 0 19-6 2-12 0-14-5 9 2 15-5 14-14z" fill="#3f434c" />],
  ['标点', <><circle cx="6" cy="7" r="3" stroke="#3f434c" strokeWidth="1.800" /><circle cx="17" cy="13" r="3.500" fill="#3f434c" /><path d="M20 13c1 4-1 7-4 8" stroke="#3f434c" strokeWidth="2" /></>],
  ['软键盘', <><path d="M1 4h22v16H1z" stroke="#3f434c" strokeWidth="2" /><path d="M4 8h16M4 12h16" stroke="#3f434c" strokeWidth="2" strokeDasharray="2 1.500" /><path d="M6 16h12" stroke="#3f434c" strokeWidth="2" /></>],
  ['账户', <><circle cx="12" cy="6" r="5" fill="#3f434c" /><path d="M2 20c-1-5 3-9 10-9s11 4 10 9h-4v3H6v-3z" fill="#3f434c" /></>],
  ['工具箱', <><rect x="1" y="2" width="10" height="10" rx="4" fill="#3f434c" /><circle cx="18" cy="7" r="4" stroke="#3f434c" strokeWidth="2" /><rect x="1" y="13" width="10" height="10" rx="4" fill="#3f434c" /><rect x="13" y="13" width="10" height="10" rx="4" fill="#3f434c" /></>],
]

function SogouMark({ s }: { s: number }) {
  return (
    <Svg s={s}>
      <path d="M1 3l19-2 3 18L4 23z" fill="#2fa02c" />
      <path d="M18 6c-5-3-11-1-11 2 0 4 10 2 10 6 0 4-7 4-11 2" stroke="#fff" strokeWidth="3.500" />
    </Svg>
  )
}

function Workspace() {
  return (
    <main className="relative flex min-h-0 flex-1 bg-[#3d4454]">
      <div className="flex w-[38px] shrink-0 items-start overflow-hidden pl-[3px]">
        <Column tools={drawTools} />
      </div>
      <section className="relative min-w-0 flex-1 overflow-hidden bg-black">
        <Drawing />
        <p className="absolute top-[3px] left-[2px] font-['Liberation_Sans','Noto_Sans_CJK_SC',sans-serif] text-base leading-6 text-[#d8d8d8]">[−][俯视][二维线框]</p>
        <h1 className="absolute top-0 left-[326px] flex items-baseline font-['Noto_Sans_CJK_SC',sans-serif] text-[83px] leading-[96px] whitespace-nowrap text-[#cf940c] [-webkit-text-stroke:1px_#cf940c]">
          <span className="font-['DejaVu_Sans_Mono',monospace] text-[72px]">CAD</span>绘图
          <span className="font-['DejaVu_Sans_Mono',monospace] text-[72px]">TR</span>修剪的三种应用方法
        </h1>
        <button type="button" className="absolute top-[172px] right-[57px] flex h-5 w-[57px] items-center gap-2 rounded-md bg-[#8d8d95] pl-1 font-['Liberation_Sans',sans-serif] text-sm text-[#4c4c55]">
          WCS <span className="h-px w-2 bg-[#b5b5bc]" />
        </button>
        <div className="absolute right-[279px] bottom-[30px] flex h-[26px] w-[182px] items-center justify-between bg-[#969696] px-[3px] text-[15px] text-[#1c1c1c]">
          指定下一个栏选点或
          <span className="mr-px mb-[3px] flex h-3 w-3 items-center justify-center self-end bg-[#ececec]"><Svg s={10}><path d="M12 2v16M6 12l6 7 6-7" stroke="#777" strokeWidth="3" /></Svg></span>
        </div>
      </section>
      <div className="flex shrink-0 items-start gap-1 overflow-hidden pr-[5px] pl-1">
        <Column tools={modifyTools} />
        <Column tools={pluginTools} tile />
        <Column tools={doorTools} tile />
      </div>
      <div className="absolute right-0 bottom-[141px] flex h-[35px] w-[180px] items-center justify-end gap-1 border-y-3 border-r-3 border-black bg-[#f4f5f8] pr-1">
        <span className="absolute top-[-4px] left-[-26px]"><SogouMark s={34} /></span>
        {ime.map((t) => (
          <button key={t[0]} type="button" aria-label={t[0]} className="flex w-6 justify-center"><Svg s={20}>{t[1]}</Svg></button>
        ))}
      </div>
      <div className="pointer-events-none absolute right-[107px] bottom-0"><Logo /></div>
    </main>
  )
}

function HalfWidth({ children }: { children: ReactNode }) {
  return <span className="font-['DejaVu_Sans_Mono',monospace] text-sm whitespace-pre">{children}</span>
}

function CommandLine() {
  return (
    <section className="relative flex h-[78px] shrink-0 bg-[#3d4454] pt-1 pr-[3px] pl-[2px] text-base text-[#222]">
      <div className="flex w-[31px] shrink-0 flex-col items-center gap-2 bg-[#2d3542] pr-[2px]">
        <DotRow />
        <button type="button" aria-label="关闭命令行" className="flex"><Svg s={16}><path d="M4 4l16 16M20 4L4 20" stroke={L} strokeWidth="4" /></Svg></button>
        <button type="button" aria-label="自定义" className="flex"><Svg s={22}><path d="M2 21l10-10c-1-5 2-9 7-9l-3 4 2 3 4-1c0 5-4 7-8 6L5 23z" fill={L} /></Svg></button>
      </div>
      <div className="flex min-w-0 flex-1 flex-col">
        <div className="flex-1 border-b border-[#555] bg-[#c8c8c8] pt-[6px] pl-1 leading-[19px]">
          <p>指定下一个栏选点或<HalfWidth> [</HalfWidth>放弃<HalfWidth>(U)]:</HalfWidth></p>
          <p>指定下一个栏选点或<HalfWidth> [</HalfWidth>放弃<HalfWidth>(U)]:</HalfWidth></p>
        </div>
        <div className="flex h-[26px] items-center bg-white pl-7">
          <Caret c="#555" />
          <b className="ml-2 font-['DejaVu_Sans_Mono',monospace] text-[15px]">TRIM</b>
          <label htmlFor="command" className="ml-[5px] flex items-center whitespace-nowrap">
            指定下一个栏选点或<HalfWidth> [</HalfWidth>
            <span className="rounded-sm bg-[#d6d6d6] leading-[22px]">放弃<HalfWidth>(<span className="text-[#2b2bd0]">U</span>)</HalfWidth></span>
            <HalfWidth>]:</HalfWidth>
          </label>
          <input id="command" className="min-w-0 flex-1 outline-none" />
        </div>
      </div>
      <p className="absolute top-[9px] left-[674px] font-['Noto_Sans_CJK_SC',sans-serif] text-[55px] leading-[72px] font-bold whitespace-nowrap text-[#ffe000] [-webkit-text-stroke:8px_black] [paint-order:stroke_fill]">
        蓝选要修剪的部分空格
      </p>
    </section>
  )
}

function StatusIcon({ label, on = false, children }: { label: string; on?: boolean; children: ReactNode }) {
  return (
    <button type="button" aria-label={label} aria-pressed={on} className={`flex h-[29px] w-[30px] items-center justify-center ${on ? 'bg-[#5585c0]' : 'bg-[#37404e]'}`}>
      <Svg s={22}>{children}</Svg>
    </button>
  )
}

function StatusDrop({ label }: { label: string }) {
  return (
    <button type="button" aria-label={label} className="flex h-[29px] w-5 items-center justify-center bg-[#37404e]"><Caret /></button>
  )
}

function Cluster({ children }: { children: ReactNode }) {
  return <div className="flex shrink-0 items-center bg-[#37404e]">{children}</div>
}

const scaleMark = <path d="M12 1l3 8 2 6 5 7-7-4h-6l-7 4 5-7 2-6z" fill={L} />
const cube = <path d="M7 7h10v12H7zM7 7l4-4h10v12l-4 4M17 7l4-4" stroke={L} strokeWidth="1.300" />

function StatusBar() {
  return (
    <footer className="shrink-0 border-b-4 border-[#384152] bg-[#212a32] text-[15px] text-[#d3d7dc]">
      <nav className="flex h-6 gap-1 pl-[19px] text-[#a9b0b9]">
        <button type="button" className="h-[23px] w-14 rounded-b-xl bg-[#3a4453] font-semibold text-[#eceef0]">模型</button>
        <button type="button" className="h-[23px] w-16 rounded-b-xl bg-[#2b3541]">布局1</button>
        <button type="button" className="h-[23px] w-[67px] rounded-b-xl bg-[#2b3541]">布局2</button>
        <button type="button" aria-label="新建布局" className="flex h-5 w-7 items-center justify-center rounded-b-xl bg-[#2b3541]">
          <Svg s={12}><path d="M12 2v20M2 12h20" stroke="#b4bac2" strokeWidth="4" /></Svg>
        </button>
      </nav>
      <div className="flex h-9 items-center justify-end gap-[3px] pr-[3px]">
        <button type="button" className="h-[29px] w-[262px] bg-[#37404e] pr-[6px] text-right whitespace-nowrap">-17221.2274, 20424.9837, 0.0000</button>
        <button type="button" className="h-[29px] w-[34px] bg-[#37404e] whitespace-nowrap">模型</button>
        <Cluster>
          <StatusIcon label="栅格"><path d="M6 2v20M12 2v20M18 2v20M2 6h20M2 12h20M2 18h20" stroke={L} strokeWidth="1.300" /></StatusIcon>
          <StatusIcon label="捕捉"><path d="M3 4h18M3 9h18M3 14h18M3 19h18" stroke={L} strokeWidth="2.200" strokeDasharray="2.200 5" /></StatusIcon>
          <StatusDrop label="捕捉设置" />
        </Cluster>
        <Cluster>
          <StatusIcon label="推断约束"><path d="M2 14h9v8H2z" fill={L} /><path d="M12 20V2h9v8h-9" stroke={L} strokeWidth="1.500" /></StatusIcon>
          <StatusIcon label="动态输入" on><path d="M2 9h10M7 3v12" stroke="#fff" strokeWidth="1.500" /><path d="M8 14h15v7H8z" fill="#fff" /><path d="M10 16h4v3h-4z" fill="#5585c0" /></StatusIcon>
          <StatusIcon label="正交"><path d="M3 2v19h19M3 15h6v6" stroke={L} strokeWidth="1.300" /></StatusIcon>
          <StatusIcon label="极轴追踪"><circle cx="10" cy="12" r="8" stroke={L} strokeWidth="1.300" /><path d="M10 12h13M10 12l8-9" stroke={L} strokeWidth="1.300" /></StatusIcon>
          <StatusDrop label="极轴设置" />
          <StatusIcon label="等轴测草图"><path d="M4 2l14 20" stroke="#c96a62" /><path d="M12 2v20" stroke="#6fc390" /><circle cx="12" cy="12" r="2.500" stroke={L} /></StatusIcon>
          <StatusDrop label="等轴测设置" />
          <StatusIcon label="对象捕捉追踪" on><path d="M22 21H3L18 3" stroke="#fff" strokeWidth="1.300" /><path d="M8 11h5v4H8z" fill="#fff" /></StatusIcon>
          <StatusIcon label="对象捕捉"><path d="M5 5h16v17H5z" stroke={L} strokeWidth="1.300" /><path d="M2 2h6v6H2z" fill="#37404e" stroke={O} strokeWidth="1.500" /></StatusIcon>
          <StatusDrop label="捕捉模式" />
          <StatusIcon label="线宽" on><path d="M2 5h20M2 14h20" stroke="#fff" strokeWidth="1.400" /><path d="M2 8h11M2 13h11M2 19h20" stroke="#fff" strokeWidth="4" /></StatusIcon>
          <StatusIcon label="透明度">
            <path d="M2 2h20v20H2z" fill={L} />
            <path d="M4 5h16M4 13h16" stroke="#333b47" strokeWidth="4" strokeDasharray="4 4" />
            <path d="M8 9h12M8 17h12" stroke="#333b47" strokeWidth="4" strokeDasharray="4 4" />
          </StatusIcon>
          <StatusIcon label="选择循环"><path d="M9 9h13v13H9z" fill="#6fbf8d" /><path d="M6 18V6h13" stroke="#6fbf8d" strokeWidth="1.500" /><path d="M1 4h7M4.500 1v7" stroke="#fff" /></StatusIcon>
          <StatusIcon label="三维对象捕捉">{cube}<path d="M2 16h6v6H2z" fill="#37404e" stroke={O} strokeWidth="1.500" /></StatusIcon>
          <StatusDrop label="三维捕捉设置" />
        </Cluster>
        <Cluster>
          <StatusIcon label="动态 UCS" on><path d="M4 3v17h17" stroke="#fff" strokeWidth="1.500" /><path d="M4 0l3 5H1zM24 20l-5-3v6z" fill="#fff" /><path d="M15 4l-5 7h4l-2 6 6-8h-4z" fill="#fff" /></StatusIcon>
          <StatusIcon label="选择过滤">
            {cube}
            <path d="M3 4h5v5H3zM3 17h5v5H3zM15 17h5v5h-5zM15 4h5v5h-5z" fill={B} />
          </StatusIcon>
          <StatusDrop label="过滤设置" />
          <StatusIcon label="小控件" on><path d="M12 2l3 5H9zM12 7l7 5v8l-7 3-7-3v-8zM12 7v7M12 14l-9 5M12 14l9 5" stroke="#fff" strokeWidth="1.300" /></StatusIcon>
          <StatusDrop label="小控件设置" />
        </Cluster>
        <Cluster>
          <StatusIcon label="注释可见性">{scaleMark}<circle cx="20" cy="4" r="3" stroke={L} /></StatusIcon>
          <StatusIcon label="自动缩放">{scaleMark}<path d="M20 1l-3 5h5l-3 5" stroke={L} strokeWidth="1.500" /></StatusIcon>
          <StatusIcon label="注释比例">{scaleMark}</StatusIcon>
          <span className="w-[70px] text-center text-sm whitespace-nowrap">1:1 / 100%</span>
          <StatusDrop label="比例列表" />
        </Cluster>
        <Cluster>
          <StatusIcon label="切换工作空间">{gear}</StatusIcon>
          <StatusDrop label="工作空间列表" />
          <StatusIcon label="注释监视器"><path d="M12 1v22M1 12h22" stroke={L} strokeWidth="2.200" /></StatusIcon>
        </Cluster>
        <Cluster>
          <StatusIcon label="单位"><path d="M7 1h11v22H7z" fill={L} /><path d="M12 5h6M14 9h4M12 13h6M14 17h4" stroke="#37404e" strokeWidth="1.500" /></StatusIcon>
          <span className="w-[71px] pl-[6px]">小数</span>
          <StatusDrop label="单位列表" />
          <StatusIcon label="快捷特性"><path d="M4 1h16v22H4zM4 5h16" stroke={L} strokeWidth="1.500" /><path d="M7 10h2M11 10h7M7 14h2M11 14h7M7 18h2M11 18h7" stroke={L} strokeWidth="1.500" /></StatusIcon>
        </Cluster>
        <Cluster>
          <StatusIcon label="锁定界面"><path d="M10 18H2V2h18v7M2 5h18" stroke={L} strokeWidth="1.500" /><path d="M11 15h9v8h-9z" fill={L} /><path d="M17 15v-3c0-3 5-3 5 0v2" stroke={L} strokeWidth="1.500" /></StatusIcon>
          <StatusDrop label="锁定列表" />
          <StatusIcon label="隔离对象"><path d="M2 2h8v8H2zM11 14l5 8H6z" stroke={L} strokeWidth="1.200" /><circle cx="18" cy="11" r="4" stroke={L} strokeWidth="1.200" /></StatusIcon>
        </Cluster>
        <button type="button" aria-label="图形性能" className="flex h-[29px] w-[30px] items-center justify-center bg-[#4b6b9f]"><Svg s={22}><circle cx="12" cy="12" r="10" stroke="#aeb9cb" /><path d="M10 17l6-8" stroke="#aeb9cb" strokeWidth="2" /></Svg></button>
        <div className="flex h-[29px] w-[70px] shrink-0 items-center gap-1 bg-[#37404e]">
          <StatusIcon label="地理位置"><path d="M4 3l8-3 8 5v10l-7 6-7-5z" fill="#2f6fc8" /><path d="M1 14h10v9H1z" fill={O} /><path d="M5 1v10M1 5h10" stroke="#8fc8ff" strokeWidth="1.500" /><path d="M13 17l4 5 7-9" stroke="#4cb34a" strokeWidth="2.500" /></StatusIcon>
          <StatusIcon label="标准检查"><path d="M2 2h18v17H2z" fill="#f4f5f6" /><path d="M3 14l5-8 4 8 6-9" stroke="#5f86c0" strokeWidth="1.500" /><path d="M17 12l6 11H11z" fill="#e0803a" /></StatusIcon>
        </div>
        <Cluster>
          <StatusIcon label="全屏显示"><path d="M2 4h20v16H2z" stroke={L} strokeWidth="1.300" /><path d="M14 7h5v5M10 17H5v-5M19 7l-5 4M5 17l5-4" stroke={L} strokeWidth="1.500" /></StatusIcon>
          <StatusIcon label="自定义"><path d="M1 4h22M1 12h22M1 20h22" stroke={L} strokeWidth="2.200" /></StatusIcon>
        </Cluster>
      </div>
    </footer>
  )
}

function Taskbar() {
  return (
    <div className="flex h-[52px] shrink-0 items-center bg-[#1f1f1f] text-white">
      <button type="button" aria-label="开始" className="flex w-15 justify-center">
        <Svg s={22}><path d="M1 4l9-1v8H1zM12 3l11-2v10H12zM1 13h9v8l-9-1zM12 13h11v10l-11-2z" fill="#fff" /></Svg>
      </button>
      <label className="flex h-full w-[360px] items-center bg-[#f2f2f2] pl-[14px] text-[#3a3a3a]">
        <Svg s={22}><circle cx="14" cy="9" r="7" stroke="#222" strokeWidth="1.600" /><path d="M9 14l-7 8" stroke="#222" strokeWidth="1.600" /></Svg>
        <input type="text" aria-label="搜索" placeholder="搜索" className="ml-[14px] min-w-0 flex-1 text-[19px] outline-none placeholder:text-[#3a3a3a]" />
        <svg width="100" height="50" viewBox="0 0 102 50" className="shrink-0">
          <path d="M0 50c5-14 22-18 40-17 18-5 50-4 62 17z" fill="#f5c983" />
          <path d="M17 28h18v11H17z" fill="#e2a98d" />
          <path d="M14 30l6-9h11l6 8z" fill="#e0442f" />
          <path d="M20 33h5v6h-5zM28 33h4v3h-4z" fill="#9c4a3a" />
          <path d="M42 14h15v25H42z" fill="#e4b08f" />
          <path d="M46 30h6v9h-6z" fill="#8a3c30" />
          <path d="M45 18h3v5h-3zM51 18h3v5h-3z" fill="#8a3c30" />
          <path d="M49 2l4 7 9 6H36l9-6zM37 27l5-5h15l6 5z" fill="#b93127" />
          <circle cx="37" cy="34" r="5" fill="#5d9a49" />
          <path d="M75 43l2-20" stroke="#80502f" strokeWidth="3" />
          <circle cx="69" cy="23" r="7" fill="#7ea83e" />
          <circle cx="78" cy="18" r="8" fill="#93b84a" />
          <circle cx="84" cy="26" r="6" fill="#6d9838" />
        </svg>
      </label>
      <button type="button" aria-label="应用商店" className="flex h-full w-[66px] items-center justify-center">
        <Svg s={30}><path d="M2 1h20v22H2z" fill="#08b46c" /><path d="M7 8c0 7 10 7 10 0" stroke="#fff" strokeWidth="1.800" /></Svg>
      </button>
      <button type="button" aria-label="迅雷" className="flex h-full w-[62px] items-center justify-center">
        <Svg s={30}><rect width="24" height="24" rx="4" fill="#3b80f2" /><path d="M4 6c4 3 6 3 8 3l6-6c0 4 1 5 4 5-4 2-3 9-9 10l1 4c-4-2-4-5-7-6-2-1-3-2-4-4l5-1z" fill="#fff" /></Svg>
      </button>
      <button type="button" aria-label="AutoCAD" className="flex h-full w-[61px] items-center justify-center border-b-3 border-[#78b3e3] bg-[#4c4c4c]">
        <Svg s={30}><path d="M0 0h24v24H0z" fill="#fbe9e2" /><path d="M4 20L10 3h4l6 17h-4l-1-4H9l-1 4z" fill="#b92a20" /><path d="M12 8l2 5h-4z" fill="#fbe9e2" /></Svg>
      </button>
      <div className="ml-auto flex items-center">
        <Svg s={22}><path d="M8 1v6M14 1v6" stroke="#fff" strokeWidth="2" /><path d="M5 6h12v5l-4 5v7H9v-7l-4-5z" fill="#fff" /></Svg>
        <span className="-ml-px flex h-[22px] w-10 items-center justify-center border-2 border-white bg-linear-to-r from-[#138a4e] from-75% to-black to-75% text-[13px] leading-4">79%</span>
        <span className="h-3 w-[3px] bg-white" />
        <button type="button" aria-label="显示隐藏的图标" className="flex w-8 justify-center"><Svg s={18}><path d="M2 17L12 7l10 10" stroke="#fff" strokeWidth="2" /></Svg></button>
        <button type="button" className="w-7 text-lg">英</button>
        <span className="ml-2 flex w-7 justify-center"><SogouMark s={20} /></span>
        <div className="ml-3 flex w-[86px] flex-col items-center pt-[2px] text-base leading-[23px]">
          <span>19:03</span>
          <span>2024/5/19</span>
        </div>
        <button type="button" aria-label="通知" className="relative mr-6 ml-[18px] flex w-6 justify-center">
          <Svg s={22}><path d="M1 1h22v18h-9l-4 4v-4H1z" fill="#fff" /><path d="M5 6h14M5 10h14M5 14h9" stroke="#222" strokeWidth="1.500" /></Svg>
          <span className="absolute top-3 left-3 flex h-5 w-5 items-center justify-center rounded-full border border-[#8b8b8b] bg-[#2b2b2b] text-sm font-semibold">1</span>
        </button>
        <span className="mr-1 h-[52px] w-px bg-[#5c5c5c]" />
      </div>
    </div>
  )
}

export default function App() {
  return (
    <div className="flex h-screen flex-col overflow-hidden bg-[#14181a] font-['Noto_Sans','Noto_Sans_CJK_SC',sans-serif]">
      <div className="flex min-h-0 flex-1">
        <aside className="flex w-2 shrink-0 flex-col justify-between overflow-hidden pt-[332px] pb-3 pl-[2px] text-sm text-[#d0d0d0]">
          <span>有</span>
          <span>2</span>
        </aside>
        <div className="mr-[3px] flex min-w-0 flex-1 flex-col">
          <Header />
          <FileTabs />
          <Toolbars />
          <Workspace />
          <CommandLine />
          <StatusBar />
        </div>
      </div>
      <Taskbar />
    </div>
  )
}
